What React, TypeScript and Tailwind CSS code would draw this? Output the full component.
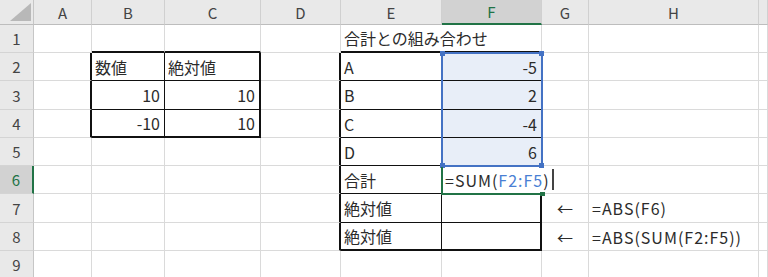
import React from "react";

type Bd = "g" | "t" | "T" | "n";

const RB: Record<Bd, string> = {
  g: "border-r border-r-[#dadada]",
  t: "border-r border-r-[#111]",
  T: "border-r-2 border-r-[#111]",
  n: "border-r-0",
};
const BB: Record<Bd, string> = {
  g: "border-b border-b-[#dadada]",
  t: "border-b border-b-[#111]",
  T: "border-b-2 border-b-[#111]",
  n: "border-b-0",
};

type CellDef = {
  t?: React.ReactNode;
  r?: Bd;
  b?: Bd;
  a?: "l" | "r" | "c";
  fill?: boolean;
  span2?: boolean;
  wide?: boolean;
};

function Cell({ d }: { d: CellDef }) {
  const align =
    d.a === "r" ? "justify-end pr-[4px]" : d.a === "c" ? "justify-center" : "justify-start pl-[3px]";
  return (
    <div
      className={`flex items-center whitespace-nowrap overflow-visible text-[16px] leading-none text-[#2b2b2b] ${align} ${RB[d.r ?? "g"]} ${BB[d.b ?? "g"]} ${d.fill ? "bg-[#e8eef8]" : ""} ${d.span2 ? "col-span-2" : ""} ${d.wide ? "tracking-[1px]" : ""}`}
    >
      {d.t}
    </div>
  );
}

function RowHead({ n, sel }: { n: number; sel?: boolean }) {
  return (
    <div
      className={`flex items-center justify-center text-[15px] leading-none border-b border-b-[#d4d4d4] ${
        sel
          ? "bg-[#d2d2d2] text-[#217346] border-r-2 border-r-[#217346]"
          : "bg-[#e9e9e9] text-[#444] border-r border-r-[#c6c6c6]"
      }`}
    >
      {n}
    </div>
  );
}

function ColHead({ l, sel }: { l: string; sel?: boolean }) {
  return (
    <div
      className={`flex items-center justify-center text-[15px] leading-none border-r border-r-[#d0d0d0] ${
        sel
          ? "bg-[#d2d2d2] text-[#217346] border-b-2 border-b-[#217346]"
          : "bg-[#e9e9e9] text-[#444] border-b border-b-[#bdbdbd]"
      }`}
    >
      {l}
    </div>
  );
}

const E: CellDef = {};

const rows: { n: number; sel?: boolean; cells: CellDef[] }[] = [
  {
    n: 1,
    cells: [
      E,
      { b: "T" },
      { b: "T" },
      E,
      { t: "合計との組み合わせ", span2: true, b: "T" },
      E,
      E,
      E,
    ],
  },
  {
    n: 2,
    cells: [
      { r: "T" },
      { t: "数値", r: "t", b: "t" },
      { t: "絶対値", r: "T", b: "t" },
      { r: "T" },
      { t: "A", r: "t", b: "t" },
      { t: "-5", a: "r", fill: true, b: "t" },
      E,
      E,
      E,
    ],
  },
  {
    n: 3,
    cells: [
      { r: "T" },
      { t: "10", a: "r", r: "t", b: "t" },
      { t: "10", a: "r", r: "T", b: "t" },
      { r: "T" },
      { t: "B", r: "t", b: "t" },
      { t: "2", a: "r", fill: true, b: "t" },
      E,
      E,
      E,
    ],
  },
  {
    n: 4,
    cells: [
      { r: "T" },
      { t: "-10", a: "r", r: "t", b: "T" },
      { t: "10", a: "r", r: "T", b: "T" },
      { r: "T" },
      { t: "C", r: "t", b: "t" },
      { t: "-4", a: "r", fill: true, b: "t" },
      E,
      E,
      E,
    ],
  },
  {
    n: 5,
    cells: [
      E,
      E,
      E,
      { r: "T" },
      { t: "D", r: "t", b: "t" },
      { t: "6", a: "r", fill: true, b: "t" },
      E,
      E,
      E,
    ],
  },
  {
    n: 6,
    sel: true,
    cells: [
      E,
      E,
      E,
      { r: "T" },
      { t: "合計", r: "t", b: "t" },
      {
        t: (
          <span className="flex items-center">
            <span>=SUM(</span>
            <span className="text-[#4a7fd4]">F2:F5</span>
            <span>)</span>
            <span className="ml-[2px] inline-block h-[21px] w-[2px] bg-[#444]" />
          </span>
        ),
        r: "n",
        b: "g",
        wide: true,
      },
      E,
      E,
      E,
    ],
  },
  {
    n: 7,
    cells: [
      E,
      E,
      E,
      { r: "T" },
      { t: "絶対値", r: "t", b: "t" },
      { r: "T", b: "t" },
      { t: "←", a: "c" },
      { t: "=ABS(F6)", wide: true },
      E,
    ],
  },
  {
    n: 8,
    cells: [
      E,
      E,
      E,
      { r: "T" },
      { t: "絶対値", r: "t", b: "T" },
      { r: "T", b: "T" },
      { t: "←", a: "c" },
      { t: "=ABS(SUM(F2:F5))", wide: true },
      E,
    ],
  },
  { n: 9, cells: [E, E, E, E, E, E, E, E, E] },
];

export default function App() {
  return (
    <div className="h-[277px] w-[768px] overflow-hidden bg-white font-['Noto_Sans_CJK_JP',sans-serif]">
      <div className="relative grid grid-cols-[34px_58px_73px_96px_80px_101px_100px_47px_170px_1fr] grid-rows-[25px_28px_28px_29px_28px_28px_28px_29px_28px_28px]">
        {/* corner */}
        <div className="flex items-end justify-end bg-[#e9e9e9] border-r border-r-[#c6c6c6] border-b border-b-[#bdbdbd] pb-[3px] pr-[2px]">
          <svg width="21" height="18" viewBox="0 0 21 18">
            <polygon points="21,0 21,18 0,18" fill="#b8b8b8" />
          </svg>
        </div>
        <ColHead l="A" />
        <ColHead l="B" />
        <ColHead l="C" />
        <ColHead l="D" />
        <ColHead l="E" />
        <ColHead l="F" sel />
        <ColHead l="G" />
        <ColHead l="H" />
        <ColHead l="" />

        {rows.map((row) => (
          <React.Fragment key={row.n}>
            <RowHead n={row.n} sel={row.sel} />
            {row.cells.map((c, i) => (
              <Cell key={i} d={c} />
            ))}
          </React.Fragment>
        ))}

        {/* reference range highlight F2:F5 */}
        <div className="pointer-events-none absolute left-[441px] top-[52px] h-[115px] w-[102px] border-2 border-[#4472c4]">
          <div className="absolute -left-[3px] -top-[3px] h-[5px] w-[5px] bg-[#4472c4]" />
          <div className="absolute -right-[3px] -top-[3px] h-[5px] w-[5px] bg-[#4472c4]" />
          <div className="absolute -left-[3px] -bottom-[3px] h-[5px] w-[5px] bg-[#4472c4]" />
          <div className="absolute -right-[3px] -bottom-[3px] h-[5px] w-[5px] bg-[#4472c4]" />
        </div>
        {/* active cell F6 */}
        <div className="pointer-events-none absolute left-[441px] top-[167px] h-[28px] w-[102px] border-l-2 border-b-2 border-[#217346]">
          <div className="absolute -right-[2px] -bottom-[3px] h-[4px] w-[5px] bg-[#217346]" />
        </div>
      </div>
    </div>
  );
}
